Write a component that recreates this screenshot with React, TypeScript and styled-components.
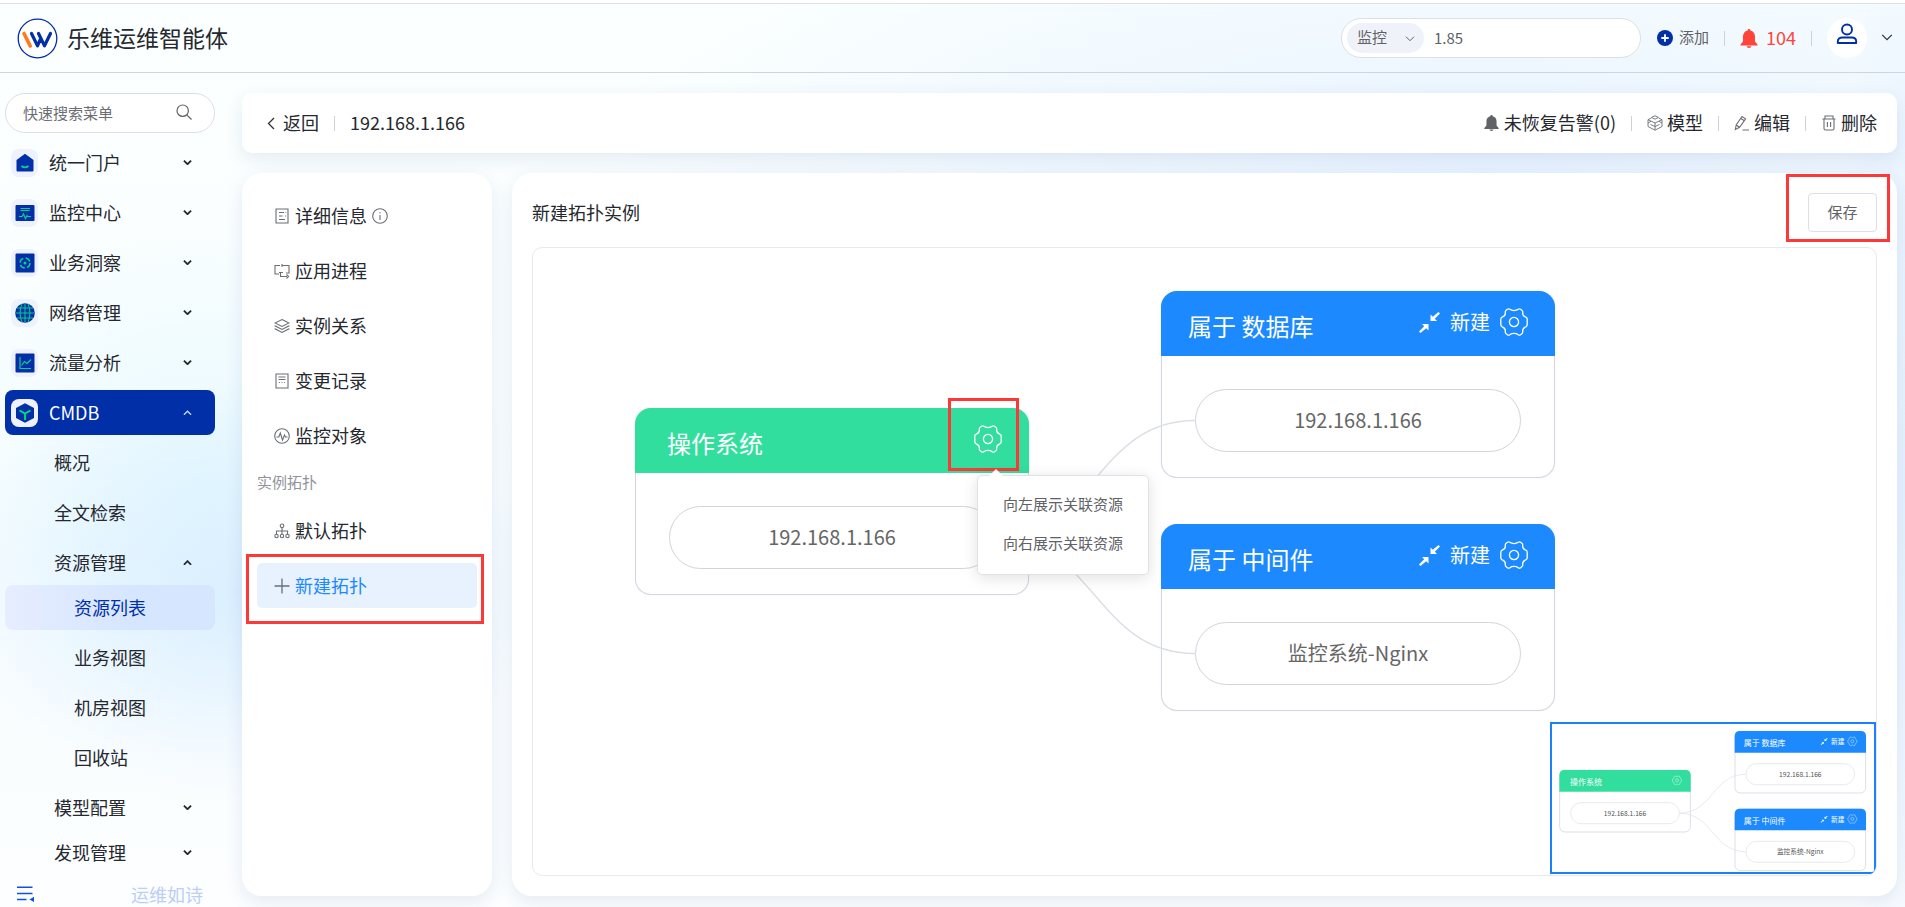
import React from "react";
import styled, { createGlobalStyle, css } from "styled-components";

const BLUE = "#002fa7";
const LINK = "#1c89ff";
const GREEN = "#32de9d";
const MARK = "#fd3838";
const LINE = "#dddfe6";
const FONT = `"Noto Sans CJK SC", "Open Sans", sans-serif`;

const GlobalStyle = createGlobalStyle`
  *, *::before, *::after { box-sizing: border-box; }
  body { margin: 0; background: #fff; color: #25282e; font: 400 18px/24px ${FONT}; }
  button, input, select { font: inherit; color: inherit; }
  button { border: 0; padding: 0; background: none; cursor: pointer; }
  a { color: inherit; text-decoration: none; }
  ul { list-style: none; margin: 0; padding: 0; }
  h1, h2, h3, p { margin: 0; font-weight: inherit; font-size: inherit; }
  svg { display: block; flex: none; }
`;

/* ---------- page frame ---------- */

const Page = styled.div`
  min-height: 100vh;
  display: flex;
  flex-direction: column;
  border-top: 3px solid #fff;
  background:
    radial-gradient(ellipse 300px 210px at 240px 590px, rgba(205, 231, 255, 0.6), rgba(205, 231, 255, 0)),
    radial-gradient(ellipse 260px 260px at 200px 480px, rgba(224, 247, 255, 0.7), rgba(224, 247, 255, 0)),
    radial-gradient(ellipse 900px 300px at 78% 170px, rgba(226, 240, 255, 0.8), rgba(226, 240, 255, 0)),
    radial-gradient(ellipse 70px 600px at 100% 480px, rgba(226, 238, 255, 0.8), rgba(226, 238, 255, 0)),
    linear-gradient(#fbffff, #f8fdff 60%, #fcfeff);
`;

const TopBar = styled.header`
  height: 70px;
  display: flex;
  align-items: center;
  justify-content: space-between;
  padding: 0 12px 0 17px;
  border-top: 1px solid #dfe2e4;
  border-bottom: 1px solid #d2d5d8;
`;

const Brand = styled.div`
  display: flex;
  align-items: center;
  gap: 9px;
  font-size: 23px;
`;

const TopTools = styled.div`
  display: flex;
  align-items: center;
  font-size: 15px;
  color: #606266;
`;

/* Text set a little above the centre of its row, level with the icons. */
const Label = styled.span<{ $grow?: boolean }>`
  padding-bottom: 2px;
  ${(p) => p.$grow && css`flex: 1;`}
`;

const SearchPill = styled.div`
  display: flex;
  align-items: center;
  width: 300px;
  height: 40px;
  padding: 0 5px;
  margin-right: 16px;
  border: 1px solid #dcdfe3;
  border-radius: 20px;
  background: #fff;
`;

const ScopeBox = styled.label`
  position: relative;
  display: flex;
  align-items: center;
  width: 77px;
  height: 30px;
  border-radius: 15px;
  background: #f0f2fa;
  svg { position: absolute; right: 9px; top: 13px; pointer-events: none; }
`;

const Scope = styled.select`
  appearance: none;
  width: 100%;
  height: 100%;
  padding: 0 10px 2px;
  border: 0;
  outline: 0;
  background: none;
`;

const Field = styled.input`
  flex: 1;
  min-width: 0;
  height: 36px;
  padding: 0 10px 2px;
  border: 0;
  outline: 0;
  background: none;
  &::placeholder { color: #6b6e73; opacity: 1; }
`;

const Divider = styled.span<{ $gap: number }>`
  width: 1px;
  height: 15px;
  margin: 0 ${(p) => p.$gap}px;
  background: #cfd2d6;
`;

const IconButton = styled.button<{ $gap?: number; $alert?: boolean }>`
  display: flex;
  align-items: center;
  gap: ${(p) => p.$gap ?? 6}px;
  ${(p) => p.$alert && css`color: #ff4539; font-size: 18px;`}
`;

const Avatar = styled.button`
  display: grid;
  place-items: center;
  width: 40px;
  height: 40px;
  margin-right: 14px;
  padding-bottom: 8px;
  border-radius: 50%;
  background: #fff;
`;

const Body = styled.div`
  flex: 1;
  display: flex;
`;

/* ---------- sidebar ---------- */

const Sidebar = styled.aside`
  width: 242px;
  flex: none;
  display: flex;
  flex-direction: column;
  padding: 20px 27px 0 5px;
`;

const MenuSearch = styled.label`
  display: flex;
  align-items: center;
  height: 40px;
  margin-bottom: 7px;
  padding: 0 22px 0 7px;
  border: 1px solid #dcdfe3;
  border-radius: 20px;
  background: #fff;
  font-size: 15px;
  svg { margin-bottom: 3px; }
`;

const MenuRow = styled.a<{ $level?: number; $tight?: boolean; $state?: "open" | "current" }>`
  display: flex;
  align-items: center;
  height: 45px;
  margin-bottom: ${(p) => (p.$tight ? 0 : 5)}px;
  padding: 0 23px 0 ${(p) => [6, 49, 69][p.$level ?? 0]}px;
  border-radius: 8px;
  ${(p) => p.$state === "open" && css`background: ${BLUE}; color: #fff;`}
  ${(p) => p.$state === "current" && css`
    color: ${BLUE};
    background: linear-gradient(90deg, #e6edff, #d6e6ff 60%);
  `}
`;

const MenuIcon = styled.span`
  display: grid;
  place-items: center;
  width: 27px;
  height: 28px;
  margin-right: 11px;
  border-radius: 8px;
  background: #eef1fe;
`;

const SideFooter = styled.footer`
  height: 32px;
  display: flex;
  align-items: center;
  justify-content: space-between;
  padding: 5px 12px 0 12px;
  color: #bccdf6;
`;

/* ---------- workspace ---------- */

const Workspace = styled.main`
  flex: 1;
  min-width: 0;
  display: flex;
  flex-direction: column;
  gap: 20px;
  padding: 20px 8px 11px 0;
`;

const surface = css`
  background: #fff;
  box-shadow: 0 6px 18px rgba(40, 70, 130, 0.1);
`;

const TitleBar = styled.section`
  ${surface}
  height: 60px;
  display: flex;
  align-items: center;
  justify-content: space-between;
  padding: 0 20px 0 25px;
  border-radius: 10px;
`;

const BarGroup = styled.div`
  display: flex;
  align-items: center;
`;

const Columns = styled.div`
  flex: 1;
  display: flex;
  gap: 20px;
`;

const TabPanel = styled.nav`
  ${surface}
  width: 250px;
  flex: none;
  padding: 20px 15px;
  border-radius: 20px;
`;

const Tab = styled.a<{ $active?: boolean }>`
  position: relative;
  display: flex;
  align-items: center;
  gap: 5px;
  height: 45px;
  margin-bottom: 10px;
  padding-left: 17px;
  border-radius: 5px;
  ${(p) => p.$active && css`background: #e8f2ff; color: ${LINK};`}
`;

const TabCaption = styled.p`
  height: 40px;
  line-height: 28px;
  font-size: 15px;
  color: #909399;
`;

const MainPanel = styled.section`
  ${surface}
  flex: 1;
  min-width: 0;
  display: flex;
  flex-direction: column;
  padding: 20px;
  border-radius: 20px;
`;

const PanelHead = styled.div`
  display: flex;
  justify-content: space-between;
  align-items: center;
  height: 39px;
  margin-bottom: 15px;
`;

const SaveBox = styled.div`
  position: relative;
`;

const SaveButton = styled.button`
  width: 69px;
  height: 39px;
  padding-bottom: 2px;
  border: 1px solid #dcdfe6;
  border-radius: 4px;
  background: #fff;
  color: #606266;
  font-size: 15px;
`;

/* Red frame that highlights the element it is placed in. */
const Highlight = styled.span<{ $inset: string }>`
  position: absolute;
  inset: ${(p) => p.$inset};
  border: 3px solid ${MARK};
  pointer-events: none;
`;

/* ---------- topology canvas ---------- */

const Canvas = styled.div`
  position: relative;
  flex: 1;
  min-height: 620px;
  overflow: hidden;
  border: 1px solid #e6e9f0;
  border-radius: 10px;
`;

const NodeCard = styled.article<{ $x: number; $y: number }>`
  position: absolute;
  left: ${(p) => p.$x}px;
  top: ${(p) => p.$y}px;
  width: 394px;
  height: 187px;
  border-radius: 16px;
  box-shadow: inset 0 0 0 1px #d3d7e1, 0 0 1px #d3d7e1;
`;

const NodeHead = styled.header<{ $tone: string }>`
  display: flex;
  align-items: center;
  justify-content: space-between;
  height: 65px;
  padding: 0 27px;
  border-radius: 16px 16px 0 0;
  background: ${(p) => p.$tone};
  color: #fff;
`;

const NodeTitle = styled.h3<{ $root?: boolean }>`
  padding: 5px 0 0 ${(p) => (p.$root ? 5 : 0)}px;
  font-size: 24px;
  line-height: 32px;
`;

const NodeActions = styled.div`
  display: flex;
  align-items: center;
  gap: 10px;
  padding-bottom: 3px;
  font-size: 20px;
`;

const GearButton = styled.button`
  position: relative;
  color: #fff;
`;

const NodeItem = styled.div`
  display: grid;
  place-items: center;
  width: 326px;
  height: 63px;
  margin: 33px auto 0;
  padding-bottom: 2px;
  border: 1px solid #d3d4d8;
  border-radius: 32px;
  font-size: 20px;
  color: #666;
`;

const Edges = styled.svg`
  position: absolute;
  inset: 0;
  width: 100%;
  height: 100%;
  pointer-events: none;
`;

const Popup = styled.ul`
  position: absolute;
  left: 444px;
  top: 227px;
  width: 172px;
  padding: 8px 0 12px;
  border: 1px solid #e0e2e8;
  border-radius: 5px;
  background: #fff;
  box-shadow: 0 3px 15px rgba(0, 0, 0, 0.12);
  color: #606266;
  font-size: 15px;
  &::before {
    content: "";
    position: absolute;
    left: 11px;
    top: -7px;
    border: 7px solid transparent;
    border-top: 0;
    border-bottom-color: #fff;
  }
`;

const PopupItem = styled.button`
  width: 100%;
  height: 39px;
  padding-left: 25px;
  text-align: left;
`;

const MiniMap = styled.div`
  position: absolute;
  right: 0;
  bottom: 1px;
  width: 326px;
  height: 152px;
  border: 2px solid #1a80fb;
  border-radius: 0 0 4px 0;
  background: #fff;
`;

/* ---------- icons ---------- */

const Logo = () => (
  <svg width="41" height="41" viewBox="0 0 41 41" fill="none" strokeLinecap="round" strokeLinejoin="round">
    <circle cx="20.500" cy="20.500" r="19.300" fill="#fff" stroke={BLUE} strokeWidth="1.300" />
    <path d="M7 15.500l6.200 12.500" stroke="#ff7a1a" strokeWidth="3.600" />
    <path d="M14.500 15.500l6 12.300 2.800-6.500M21.500 15.500l6 12.300L33.500 15.500" stroke={BLUE} strokeWidth="3.200" />
  </svg>
);

const Chevron = ({ size = 9, dir = "down", color = "currentColor", width = 2 }: {
  size?: number; dir?: "down" | "up"; color?: string; width?: number;
}) => (
  <svg width={size} height={size * 0.6} viewBox="0 0 10 6" fill="none" stroke={color} strokeWidth={width}>
    <path d={dir === "down" ? "M1 .7l4 4 4-4" : "M1 5.300l4-4 4 4"} />
  </svg>
);

const SearchIcon = () => (
  <svg width="16" height="16" viewBox="0 0 16 16" fill="none" stroke="#606266" strokeWidth="1.200">
    <circle cx="6.700" cy="6.700" r="5.700" />
    <path d="M10.800 10.800L15.500 15.500" />
  </svg>
);

const BellIcon = ({ w, h, color }: { w: number; h: number; color: string }) => (
  <svg width={w} height={h} viewBox="0 0 17 19" fill={color}>
    <path d="M8.500 0c.9 0 1.300.6 1.400 1.500 3 .7 4.600 3 4.600 6v5L17 15.500v1H0v-1l2.500-3v-5c0-3 1.600-5.300 4.600-6C7.200.6 7.600 0 8.500 0zM6 17.300h5c-.3 1.100-1.300 1.700-2.500 1.700S6.300 18.400 6 17.300z" />
  </svg>
);

const PlusCircle = () => (
  <svg width="16" height="16" viewBox="0 0 16 16">
    <circle cx="8" cy="8" r="8" fill={BLUE} />
    <path d="M8 4.300v7.400M4.300 8h7.400" stroke="#fff" strokeWidth="1.800" />
  </svg>
);

const PersonIcon = () => (
  <svg width="22" height="22" viewBox="0 0 22 22" fill="none" stroke={BLUE} strokeWidth="1.900">
    <circle cx="11" cy="6.500" r="5" />
    <path d="M1.800 20v-1.500c0-2.600 2-4 4.500-4h9.400c2.500 0 4.500 1.400 4.500 4V20z" strokeLinejoin="round" />
  </svg>
);

const Stroke16 = ({ children, size = 16 }: { children: React.ReactNode; size?: number }) => (
  <svg width={size} height={size} viewBox="0 0 16 16" fill="none" stroke="#6b6e73" strokeWidth="1.100">
    {children}
  </svg>
);

const barIcons = {
  back: <svg width="8" height="13" viewBox="0 0 8 13" fill="none" stroke="#303133" strokeWidth="1.300"><path d="M7 1L1.500 6.500 7 12" /></svg>,
  cube: <Stroke16><path d="M8 .8L11.500 2.400 8 4.200 4.500 2.400zM4.300 3L1 4.700l7 3.300 7-3.300L11.700 3M1 4.700v6.800L8 15.200l7-3.700V4.700M8 8v7M4 6.200l-3 2M3.500 9.500L8 11.500M15 8.200L12 6.200M12.500 9.500L8 11.500" strokeWidth=".9" /></Stroke16>,
  pencil: <Stroke16><path d="M1.300 14.500L2.200 10 8 1.500l3.600 2.300L5.600 12.300zM6.800 3.500l3.500 2.300M2.200 10l3.400 2.300M8.500 15H15" /></Stroke16>,
  trash: <Stroke16><path d="M1.500 4h13M4 4V1h8v3M3 4v9.500q0 1.500 1.500 1.500h7q1.500 0 1.500-1.500V4M6.400 7v5M9.600 7v5" /></Stroke16>,
};

const tabIcons = {
  detail: <Stroke16><path d="M2 1h12v14H2zM5 4.500h5M5 8h3.500M5 11.500h6M11.500 4.500h.8M11 8h1" /></Stroke16>,
  process: <Stroke16><path d="M6 2.500H1v8.500h4M8 2.500h7V10h-3M8 1v3M6.500 9.500v4H13M5 9.500h4M12.500 11.500l2 2-2 2" /></Stroke16>,
  layers: <Stroke16><path d="M8 1.500L15 5 8 8.500 1 5zM1 7.500v.3L8 11.500l7-3.700v-.3M1 10.500v.3L8 14.500l7-3.700v-.3" /></Stroke16>,
  record: <Stroke16><path d="M2 1h12v14H2zM4.500 4h7M4.500 6.500h7M5 9.500h.9M7.500 9.500h.9M10 9.500h.9" /></Stroke16>,
  monitor: <Stroke16><circle cx="8" cy="8" r="7.300" /><path d="M2.500 9h2.300L6.300 5l2.200 7 2-5 1 2h2" /></Stroke16>,
  tree: <Stroke16><circle cx="8" cy="2.800" r="1.800" /><circle cx="2.500" cy="13" r="1.700" /><circle cx="8" cy="13" r="1.700" /><circle cx="13.500" cy="13" r="1.700" /><path d="M8 4.600v6.700M2.500 11.300V8h11v3.300" /></Stroke16>,
  plus: <Stroke16><path d="M8 .5v15M.5 8h15" strokeWidth="1.300" /></Stroke16>,
  info: <Stroke16><circle cx="8" cy="8" r="7.300" /><path d="M8 7v5M8 4.200v1.300" /></Stroke16>,
};

const NEON = "#0bd08b";
const Menu20 = ({ children }: { children: React.ReactNode }) => (
  <svg width="20" height="20" viewBox="0 0 20 20" fill="none" stroke={NEON} strokeWidth="1.200">{children}</svg>
);
const menuIcons = {
  home: <Menu20><path d="M10 .8L18.500 7v10.500q0 1-1 1h-15q-1 0-1-1V7z" fill={BLUE} stroke="none" /><path d="M6.500 13q3.500 2.600 7 0" strokeWidth="1.800" /></Menu20>,
  monitor: <Menu20><rect x=".5" y="2" width="19" height="16" rx="1" fill={BLUE} stroke="none" /><path d="M5.500 5.500h9.500M5.500 7.500h9" /><path d="M4 13.500h3l1.500-2.500 2 4.500 1.500-3 .8 1H16" /></Menu20>,
  insight: <Menu20><rect x=".5" y=".5" width="19" height="19" rx="1" fill={BLUE} stroke="none" /><circle cx="10" cy="10" r="5" strokeDasharray="5.500 2.350" strokeWidth="1.400" /><circle cx="10" cy="10" r="1.500" fill={NEON} stroke="none" /></Menu20>,
  globe: <Menu20><circle cx="10" cy="10" r="9.800" fill={BLUE} stroke="none" /><path d="M10 .5v19M.5 10h19M2 5h16M2 15h16M7 .8q-4 9.200 0 18.400M13 .8q4 9.200 0 18.400" strokeWidth="1" /></Menu20>,
  chart: <Menu20><rect x=".5" y=".5" width="19" height="19" rx="1" fill={BLUE} stroke="none" /><path d="M5 4v11.500h11M6.500 12.500l3-4 2.500 2 4-4" /></Menu20>,
  cmdb: <Menu20><path d="M10 .3l9 4.700v10l-9 4.700L1 15V5z" fill={BLUE} stroke="none" /><path d="M4.500 7.500L10 10.500l5.500-3M10 10.500V17" stroke="#00e27a" strokeWidth="1.800" /></Menu20>,
};

const CollapseIcon = () => (
  <svg width="18" height="16" viewBox="0 0 18 16" fill="none" stroke="#1050e8" strokeWidth="1.400">
    <path d="M0 1.200h15.500M0 7.500h15.500M0 13.500h9.500" />
    <path d="M17 10.800v5.200l-4.500-2.600z" fill="#1050e8" stroke="none" />
  </svg>
);

const GearShape = () => (
  <g fill="none" stroke="#fff" strokeWidth="1.300" strokeLinejoin="round">
    <path d="M-13.200 -2.800Q-13.200 -4.200 -11.800 -4.800Q-8.300 -6.200 -8.700 -9.500Q-8.900 -11 -7.800 -11.800L-6.600 -12.700Q-5.300 -13.500 -4.200 -12.700C-2 -11 2 -11 4.200 -12.700Q5.300 -13.500 6.600 -12.700L7.800 -11.800Q8.900 -11 8.700 -9.500Q8.300 -6.200 11.800 -4.800Q13.200 -4.200 13.200 -2.800V2.800Q13.200 4.200 11.800 4.800Q8.300 6.200 8.700 9.500Q8.900 11 7.800 11.800L6.600 12.700Q5.300 13.500 4.200 12.700C2 11 -2 11 -4.200 12.700Q-5.300 13.500 -6.600 12.700L-7.800 11.800Q-8.900 11 -8.700 9.500Q-8.300 6.200 -11.800 4.800Q-13.200 4.200 -13.200 2.800Z" />
    <circle r="4.600" />
  </g>
);

const Gear = () => (
  <svg width="28" height="28" viewBox="-14 -14 28 28"><GearShape /></svg>
);

const shrinkPath = "M19.500 0L21 1.500 15.800 6.700 18 9H11.500V2.500L13.800 4.700zM1.500 21L0 19.500 5.200 14.300 3 12H9.500V18.500L7.200 16.300z";
const ShrinkIcon = () => (
  <svg width="21" height="21" viewBox="0 0 21 21" fill="#fff"><path d={shrinkPath} /></svg>
);

/* ---------- data ---------- */

const topMenu: [string, React.ReactNode][] = [
  ["统一门户", menuIcons.home],
  ["监控中心", menuIcons.monitor],
  ["业务洞察", menuIcons.insight],
  ["网络管理", menuIcons.globe],
  ["流量分析", menuIcons.chart],
];

type TopoNode = { x: number; y: number; title: string; item: string; root?: boolean };
const nodes: TopoNode[] = [
  { x: 102, y: 160, title: "操作系统", item: "192.168.1.166", root: true },
  { x: 628, y: 43, title: "属于 数据库", item: "192.168.1.166" },
  { x: 628, y: 276, title: "属于 中间件", item: "监控系统-Nginx" },
];
const edges = [
  "M462 289.500C562 289.500 562 172.500 662 172.500",
  "M462 289.500C562 289.500 562 405.500 662 405.500",
];

/* ---------- parts ---------- */

const NodeView = ({ node }: { node: TopoNode }) => (
  <NodeCard $x={node.x} $y={node.y}>
    <NodeHead $tone={node.root ? GREEN : LINK}>
      <NodeTitle $root={node.root}>{node.title}</NodeTitle>
      <NodeActions>
        {!node.root && <button aria-label="收起"><ShrinkIcon /></button>}
        {!node.root && <button>新建</button>}
        <GearButton aria-label="设置">
          <Gear />
          {node.root && <Highlight $inset="-27px -17px -18px -26px" />}
        </GearButton>
      </NodeActions>
    </NodeHead>
    <NodeItem>{node.item}</NodeItem>
  </NodeCard>
);

const MiniNode = ({ node }: { node: TopoNode }) => (
  <g transform={`translate(${node.x} ${node.y})`} fontFamily={FONT}>
    <rect x="1" y="1" width="392" height="185" rx="16" fill="#fff" stroke={LINE} strokeWidth="3" />
    <path d="M0 65V16Q0 0 16 0H378Q394 0 394 16V65Z" fill={node.root ? GREEN : LINK} />
    <text x={node.root ? 32 : 27} y="45" fontSize="24" fill="#fff">{node.title}</text>
    {!node.root && <path d={shrinkPath} transform="translate(258 21)" fill="#fff" />}
    {!node.root && <text x="289" y="40" fontSize="20" fill="#fff">新建</text>}
    <g transform="translate(353 31)"><GearShape /></g>
    <rect x="34" y="98" width="326" height="63" rx="31" fill="#fff" stroke={LINE} strokeWidth="2" />
    <text x="197" y="137" fontSize="20" textAnchor="middle" fill="#555">{node.item}</text>
  </g>
);

export default function App() {
  return (
    <Page>
      <GlobalStyle />
      <TopBar>
        <Brand>
          <Logo />
          <Label as="h1">乐维运维智能体</Label>
        </Brand>
        <TopTools>
          <SearchPill>
            <ScopeBox>
              <Scope aria-label="搜索范围" defaultValue="监控">
                <option>监控</option>
              </Scope>
              <Chevron size={10} width={1} color="#606266" />
            </ScopeBox>
            <Field aria-label="搜索" defaultValue="1.85" />
          </SearchPill>
          <IconButton><PlusCircle /><Label>添加</Label></IconButton>
          <Divider $gap={15} />
          <IconButton $gap={8} $alert><BellIcon w={18} h={19} color="#ff4539" /><Label>104</Label></IconButton>
          <Divider $gap={15} />
          <Avatar aria-label="用户"><PersonIcon /></Avatar>
          <IconButton aria-label="展开"><Chevron size={12} width={1} color="#303133" /></IconButton>
        </TopTools>
      </TopBar>

      <Body>
        <Sidebar>
          <MenuSearch>
            <Field aria-label="快速搜索菜单" placeholder="快速搜索菜单" />
            <SearchIcon />
          </MenuSearch>
          <nav>
            {topMenu.map(([label, icon]) => (
              <MenuRow href="#" key={label}>
                <MenuIcon>{icon}</MenuIcon>
                <Label $grow>{label}</Label>
                <Chevron />
              </MenuRow>
            ))}
            <MenuRow href="#" $state="open">
              <MenuIcon>{menuIcons.cmdb}</MenuIcon>
              <Label $grow>CMDB</Label>
              <Chevron dir="up" color="#c9d6ff" width={1.5} />
            </MenuRow>
            <MenuRow href="#" $level={1}><Label>概况</Label></MenuRow>
            <MenuRow href="#" $level={1}><Label>全文检索</Label></MenuRow>
            <MenuRow href="#" $level={1} $tight>
              <Label $grow>资源管理</Label>
              <Chevron dir="up" />
            </MenuRow>
            <MenuRow href="#" $level={2} $state="current"><Label>资源列表</Label></MenuRow>
            <MenuRow href="#" $level={2}><Label>业务视图</Label></MenuRow>
            <MenuRow href="#" $level={2}><Label>机房视图</Label></MenuRow>
            <MenuRow href="#" $level={2}><Label>回收站</Label></MenuRow>
            <MenuRow href="#" $level={1} $tight>
              <Label $grow>模型配置</Label>
              <Chevron />
            </MenuRow>
            <MenuRow href="#" $level={1} $tight>
              <Label $grow>发现管理</Label>
              <Chevron />
            </MenuRow>
          </nav>
          <SideFooter>
            <button aria-label="收起菜单"><CollapseIcon /></button>
            <span>运维如诗</span>
          </SideFooter>
        </Sidebar>

        <Workspace>
          <TitleBar>
            <BarGroup>
              <IconButton $gap={8}>{barIcons.back}<Label>返回</Label></IconButton>
              <Divider $gap={15} />
              <Label as="h2">192.168.1.166</Label>
            </BarGroup>
            <BarGroup>
              <IconButton $gap={5}><BellIcon w={15} h={16} color="#606266" /><Label>未恢复告警(0)</Label></IconButton>
              <Divider $gap={15} />
              <IconButton $gap={4}>{barIcons.cube}<Label>模型</Label></IconButton>
              <Divider $gap={15} />
              <IconButton $gap={4}>{barIcons.pencil}<Label>编辑</Label></IconButton>
              <Divider $gap={15} />
              <IconButton $gap={4}>{barIcons.trash}<Label>删除</Label></IconButton>
            </BarGroup>
          </TitleBar>

          <Columns>
            <TabPanel>
              <Tab href="#">{tabIcons.detail}<Label>详细信息</Label>{tabIcons.info}</Tab>
              <Tab href="#">{tabIcons.process}<Label>应用进程</Label></Tab>
              <Tab href="#">{tabIcons.layers}<Label>实例关系</Label></Tab>
              <Tab href="#">{tabIcons.record}<Label>变更记录</Label></Tab>
              <Tab href="#">{tabIcons.monitor}<Label>监控对象</Label></Tab>
              <TabCaption>实例拓扑</TabCaption>
              <Tab href="#">{tabIcons.tree}<Label>默认拓扑</Label></Tab>
              <Tab href="#" $active>
                {tabIcons.plus}<Label>新建拓扑</Label>
                <Highlight $inset="-9px -7px -16px -11px" />
              </Tab>
            </TabPanel>

            <MainPanel>
              <PanelHead>
                <Label as="h2">新建拓扑实例</Label>
                <SaveBox>
                  <SaveButton>保存</SaveButton>
                  <Highlight $inset="-19px -13px -10px -22px" />
                </SaveBox>
              </PanelHead>
              <Canvas>
                {nodes.map((n) => <NodeView node={n} key={n.title} />)}
                <Edges fill="none" stroke={LINE} strokeWidth="1.500">
                  {edges.map((d) => <path d={d} key={d} />)}
                </Edges>
                <Popup>
                  <li><PopupItem>向左展示关联资源</PopupItem></li>
                  <li><PopupItem>向右展示关联资源</PopupItem></li>
                </Popup>
                <MiniMap>
                  <svg width="100%" height="100%" viewBox="80 22 966 444" preserveAspectRatio="xMinYMin meet">
                    {nodes.map((n) => <MiniNode node={n} key={n.title} />)}
                    <g fill="none" stroke={LINE} strokeWidth="2">
                      {edges.map((d) => <path d={d} key={d} />)}
                    </g>
                  </svg>
                </MiniMap>
              </Canvas>
            </MainPanel>
          </Columns>
        </Workspace>
      </Body>
    </Page>
  );
}
